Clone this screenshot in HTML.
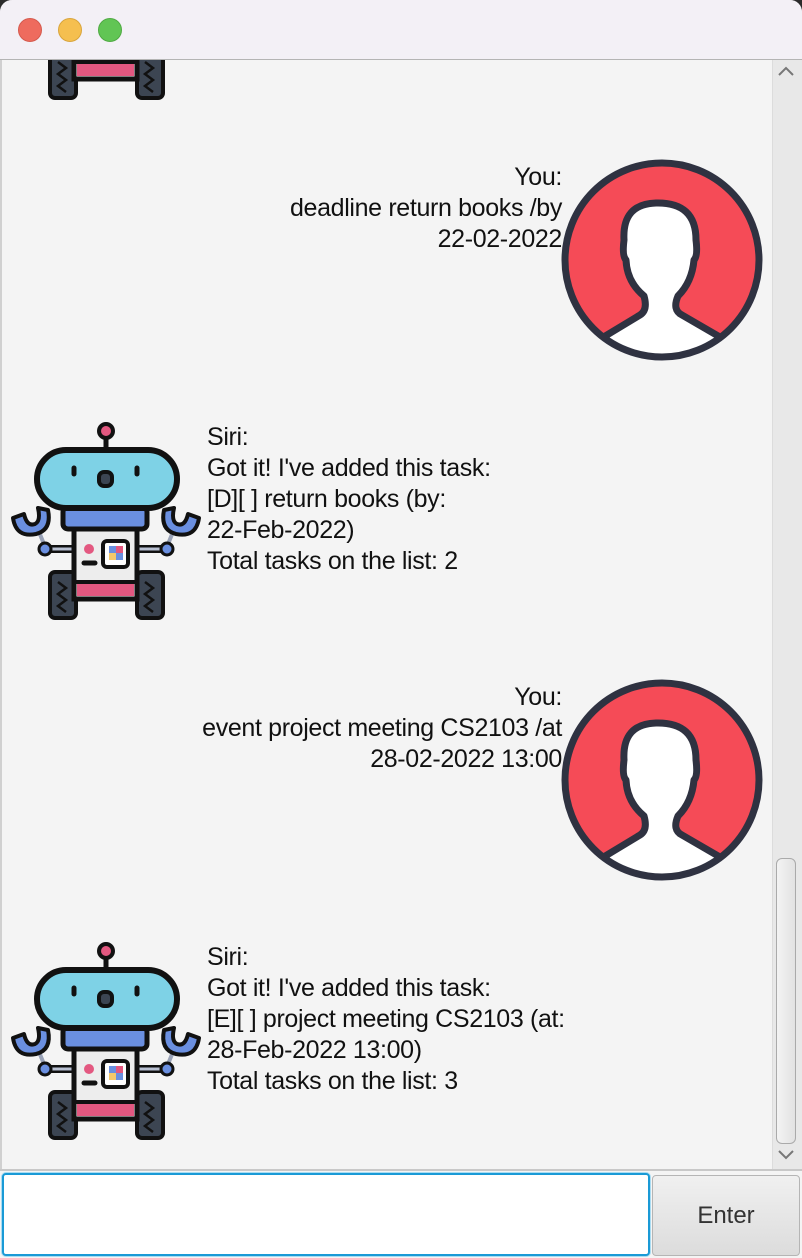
<!DOCTYPE html>
<html><head><meta charset="utf-8"><style>
html,body{margin:0;padding:0;width:802px;height:1258px;overflow:hidden;background:#2b2b2b;font-family:"Liberation Sans",sans-serif;}
#win{position:absolute;left:0;top:0;width:802px;height:1258px;background:#f4f4f4;border-radius:12px 12px 0 0;overflow:hidden;}
#title{position:absolute;left:0;top:0;width:802px;height:59px;background:#f3f0f6;border-bottom:1px solid #b4b4b4;z-index:5;}
.dot{position:absolute;top:18px;width:23px;height:24px;border-radius:50%;}
.t{position:absolute;font-size:25px;line-height:31px;color:#111;letter-spacing:-0.35px;white-space:nowrap;}
.r{text-align:right;}
</style></head><body>
<div id="win">
<div id="title">
<div class="dot" style="left:18px;background:#ee6b5e;border:1px solid #d55a4e;width:22px;height:22px"></div>
<div class="dot" style="left:58px;background:#f5bf4f;border:1px solid #d9a53c;width:22px;height:22px"></div>
<div class="dot" style="left:98px;background:#61c554;border:1px solid #4faa43;width:22px;height:22px"></div>
</div>
<div style="position:absolute;left:0;top:60px;width:2px;height:1110px;background:#d0d0d0"></div>
<svg width="802" height="1258" style="position:absolute;left:0;top:0">
<defs>
<clipPath id="cc"><circle cx="0" cy="0" r="97"/></clipPath>
<g id="robot">
<line x1="106" y1="431" x2="106" y2="450" stroke="#111" stroke-width="5"/>
<circle cx="106" cy="431" r="7" fill="#e35880" stroke="#111" stroke-width="4"/>
<line x1="37" y1="527" x2="46" y2="549" stroke="#9aa3b8" stroke-width="4"/>
<line x1="175" y1="527" x2="166" y2="549" stroke="#9aa3b8" stroke-width="4"/>
<line x1="46" y1="549" x2="74" y2="549" stroke="#111" stroke-width="8"/>
<line x1="46" y1="549" x2="74" y2="549" stroke="#b8c0d2" stroke-width="3"/>
<line x1="138" y1="549" x2="166" y2="549" stroke="#111" stroke-width="8"/>
<line x1="138" y1="549" x2="166" y2="549" stroke="#b8c0d2" stroke-width="3"/>
<circle cx="45" cy="549" r="6" fill="#6a8fe0" stroke="#111" stroke-width="3"/>
<circle cx="167" cy="549" r="6" fill="#6a8fe0" stroke="#111" stroke-width="3"/>
<path d="M13 518 L24 514 Q27 527 35 524 Q41 521 38 508 L48 510 Q52 530 36 534 Q16 538 13 518Z" fill="#6a8fe0" stroke="#111" stroke-width="4" stroke-linejoin="round"/>
<path d="M199 518 L188 514 Q185 527 177 524 Q171 521 174 508 L164 510 Q160 530 176 534 Q196 538 199 518Z" fill="#6a8fe0" stroke="#111" stroke-width="4" stroke-linejoin="round"/>
<rect x="50" y="572" width="26" height="46" rx="5" fill="#3c4552" stroke="#111" stroke-width="4"/>
<rect x="137" y="572" width="26" height="46" rx="5" fill="#3c4552" stroke="#111" stroke-width="4"/>
<path d="M58 582l8 6-8 6 8 6-8 6 8 6M145 582l8 6-8 6 8 6-8 6 8 6" stroke="#111" stroke-width="2.5" fill="none"/>
<rect x="74" y="527" width="63" height="72" fill="#ededed" stroke="#111" stroke-width="5"/>
<rect x="77" y="582" width="57" height="14" fill="#e35880"/>
<line x1="76" y1="582" x2="135" y2="582" stroke="#111" stroke-width="4"/>
<circle cx="89" cy="549" r="5" fill="#e35880"/>
<line x1="84" y1="563" x2="95" y2="563" stroke="#111" stroke-width="5" stroke-linecap="round"/>
<rect x="103" y="541" width="25" height="26" rx="4" fill="#fff" stroke="#111" stroke-width="4"/>
<rect x="109" y="546" width="7" height="7" fill="#6a8fe0"/><rect x="116" y="546" width="7" height="7" fill="#e35880"/>
<rect x="109" y="553" width="7" height="7" fill="#f5c86a"/><rect x="116" y="553" width="7" height="7" fill="#6a8fe0"/>
<rect x="63" y="507" width="84" height="22" rx="5" fill="#6a8fe0" stroke="#111" stroke-width="5"/>
<rect x="37" y="450" width="140" height="58" rx="29" fill="#7ed2e6" stroke="#111" stroke-width="6"/>
<line x1="74" y1="468" x2="74" y2="474" stroke="#111" stroke-width="5" stroke-linecap="round"/>
<line x1="137" y1="468" x2="137" y2="474" stroke="#111" stroke-width="5" stroke-linecap="round"/>
<rect x="99" y="472" width="13" height="14" rx="5" fill="#3c4552" stroke="#111" stroke-width="4"/>
</g>
<g id="user">
<circle cx="0" cy="0" r="97" fill="#f54b57"/>
<g clip-path="url(#cc)">
<path d="M-70 84 L-22 55 Q-14 50 -18 36 Q-35 22 -36 0 Q-40 -4 -38 -20 Q-40 -56 -6 -57 Q34 -58 34 -20 Q36 -4 32 0 Q30 22 16 36 Q10 50 20 55 L70 84 L70 120 L-70 120Z" fill="#fff" stroke="#2f3241" stroke-width="7" stroke-linejoin="round"/>
<path d="M-70 80 Q0 120 70 80 L70 120 L-70 120Z" fill="#ececec"/>
</g>
<circle cx="0" cy="0" r="97" fill="none" stroke="#2f3241" stroke-width="7"/>
</g>
</defs>
<use href="#robot" transform="translate(0,-520)"/>
<use href="#robot" transform="translate(0,0)"/>
<use href="#robot" transform="translate(0,520)"/>
<use href="#user" transform="translate(662,260)"/>
<use href="#user" transform="translate(662,780)"/>
</svg>
<div class="t r" style="right:240px;top:162px">You:<br>deadline return books /by<br>22-02-2022</div>
<div class="t" style="left:207px;top:422px">Siri:<br>Got it! I've added this task:<br>[D][ ] return books (by:<br>22-Feb-2022)<br>Total tasks on the list: 2</div>
<div class="t r" style="right:240px;top:682px">You:<br>event project meeting CS2103 /at<br>28-02-2022 13:00</div>
<div class="t" style="left:207px;top:942px">Siri:<br>Got it! I've added this task:<br>[E][ ] project meeting CS2103 (at:<br>28-Feb-2022 13:00)<br>Total tasks on the list: 3</div>
<div style="position:absolute;left:772px;top:60px;width:30px;height:1110px;background:#e8e8e8;border-left:1px solid #dcdcdc"></div>
<div style="position:absolute;left:776px;top:858px;width:18px;height:284px;border:1px solid #aaa;border-radius:6px;background:linear-gradient(90deg,#f3f3f3,#e2e2e2)"></div>
<svg style="position:absolute;left:776px;top:1148px" width="20" height="14"><path d="M3 3 L10 10 L17 3" stroke="#777" stroke-width="2" fill="none"/></svg>
<svg style="position:absolute;left:776px;top:64px" width="20" height="14"><path d="M3 11 L10 4 L17 11" stroke="#777" stroke-width="2" fill="none"/></svg>
<div style="position:absolute;left:0;top:1169px;width:802px;height:2px;background:#c8c8c8"></div>
<div style="position:absolute;left:2px;top:1173px;width:644px;height:79px;background:#fff;border:2px solid #1a9ad6;border-radius:4px;box-shadow:0 0 0 1px #a9dcf2"></div>
<div style="position:absolute;left:652px;top:1175px;width:146px;height:79px;background:linear-gradient(#f0f0f0,#dcdcdc);border:1px solid #b5b5b5;border-radius:4px;font-size:24px;color:#333;text-align:center;line-height:79px">Enter</div>
</div>
</body></html>
